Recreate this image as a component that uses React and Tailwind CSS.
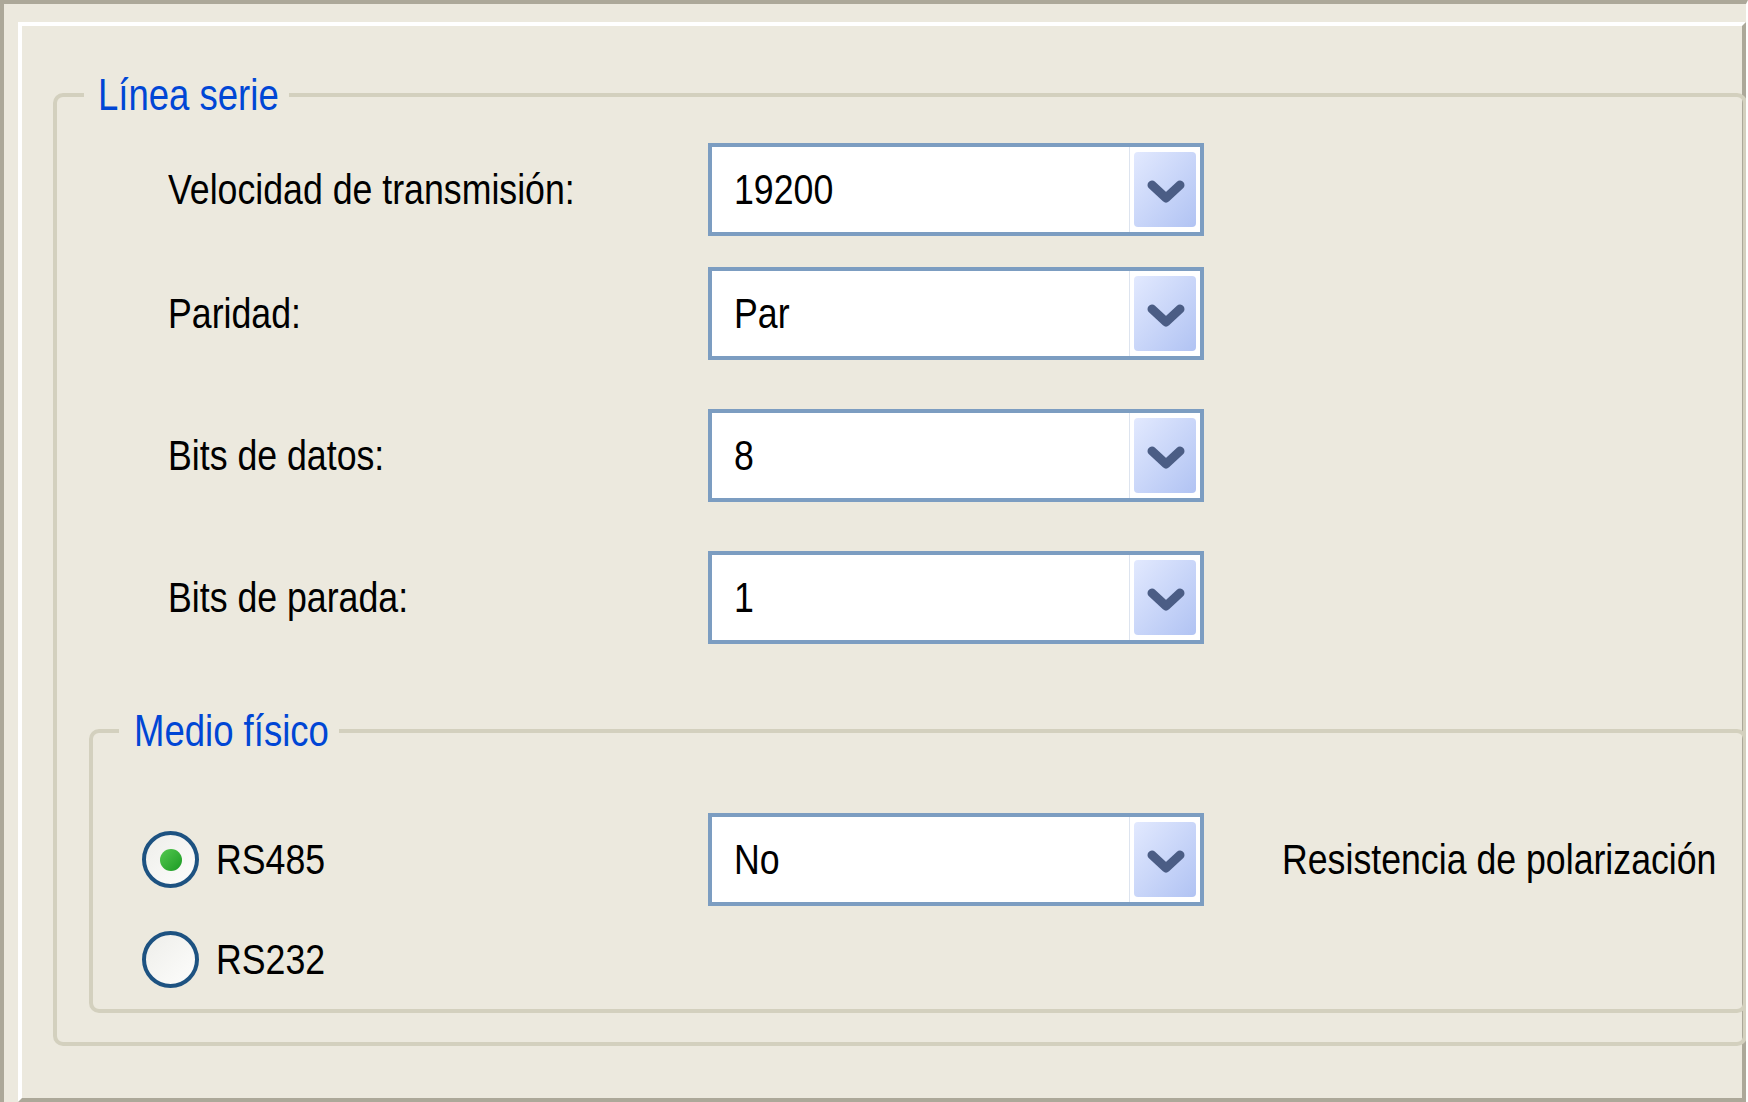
import React from "react";

const font = "font-['Liberation_Sans',Arial,sans-serif]";

// Liberation Sans squeezed to the narrow face the dialog uses
const T = ({ children }) => (
  <span className="inline-block origin-left scale-x-[0.83] whitespace-nowrap">
    {children}
  </span>
);

const Combo = ({ value }) => (
  <div className="w-[496px] h-[93px] border-4 border-[#7C9DC1] bg-white flex items-stretch shrink-0">
    <div className="flex-1 flex items-center pl-[22px] text-[43px] text-black">
      <T>{value}</T>
    </div>
    <div className="w-px bg-[#DDE4EF]"></div>
    <div className="pl-[4px] pr-[4px] py-[5px] flex">
      <div className="w-[62px] rounded-[4px] bg-gradient-to-br from-[#E2E9FE] to-[#B1C3F3] flex items-center justify-center">
        <svg width="62" height="75" viewBox="0 0 62 75">
          <polyline
            points="18,33 32,46 46,33"
            fill="none"
            stroke="#4B5D85"
            strokeWidth="9"
            strokeLinecap="round"
            strokeLinejoin="round"
          />
        </svg>
      </div>
    </div>
  </div>
);

const Radio = ({ checked }) => (
  <div className="w-[57px] h-[57px] shrink-0 rounded-full border-4 border-[#1D5281] bg-gradient-to-br from-[#EEEEEA] to-[#FDFDFC] flex items-center justify-center">
    {checked && (
      <div className="w-[22px] h-[22px] rounded-full bg-gradient-to-br from-[#52C94F] to-[#169A22]"></div>
    )}
  </div>
);

const rows = [
  { label: "Velocidad de transmisión:", value: "19200", mt: "mt-[24px]" },
  { label: "Paridad:", value: "Par", mt: "mt-[31px]" },
  { label: "Bits de datos:", value: "8", mt: "mt-[49px]" },
  { label: "Bits de parada:", value: "1", mt: "mt-[49px]" },
];

export default function App() {
  return (
    <div
      className={`w-[1748px] h-[1102px] bg-[#ECE9DE] flex flex-col border-t-4 border-l-4 border-[#ACA899] border-r-2 border-r-white pt-[18px] pl-[14px] overflow-hidden ${font}`}
    >
      <div className="flex-1 flex flex-col border-4 border-t-white border-l-white border-r-[#ACA899] border-b-[#ACA899] pl-[31px]">
        {/* Línea serie */}
        <fieldset className="mt-[45px] mr-[-5px] border-4 border-[#D3D0BE] rounded-[10px] pb-[29px]">
          <legend className="ml-[27px] w-[205px] pl-[14px] text-[44px] leading-[48px] text-[#0046D5]">
            <T>Línea serie</T>
          </legend>
          {rows.map((r) => (
            <div key={r.label} className={`flex items-center ${r.mt}`}>
              <div className="w-[651px] pl-[111px] text-[43px] text-black">
                <T>{r.label}</T>
              </div>
              <Combo value={r.value} />
            </div>
          ))}

          {/* Medio físico */}
          <fieldset className="mt-[63px] ml-[32px] mr-[-4px] border-4 border-[#D3D0BE] rounded-[10px] pb-[17px]">
            <legend className="ml-[26px] w-[220px] pl-[15px] text-[44px] leading-[48px] text-[#0046D5]">
              <T>Medio físico</T>
            </legend>
            <div className="flex items-center mt-[58px]">
              <div className="w-[615px] pl-[49px] flex items-center gap-[17px]">
                <Radio checked />
                <span className="text-[43px] text-black">
                  <T>RS485</T>
                </span>
              </div>
              <Combo value="No" />
              <span className="ml-[78px] w-[440px] text-[43px] text-black">
                <T>Resistencia de polarización</T>
              </span>
            </div>
            <div className="flex items-center mt-[21px] pl-[49px] gap-[17px]">
              <Radio />
              <span className="text-[43px] text-black">
                <T>RS232</T>
              </span>
            </div>
          </fieldset>
        </fieldset>
      </div>
    </div>
  );
}
